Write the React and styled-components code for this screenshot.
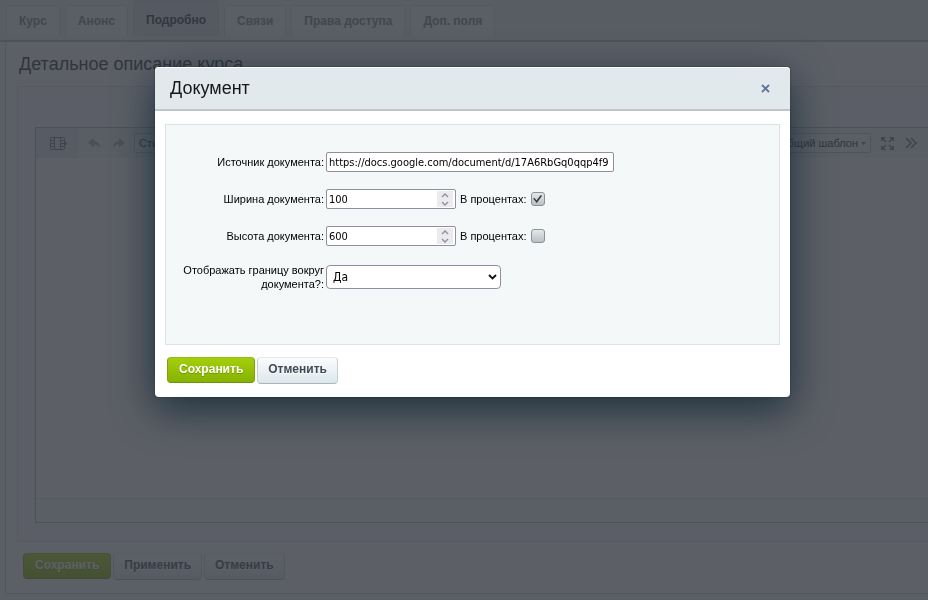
import React, { useState } from 'react'
import styled, { createGlobalStyle, css } from 'styled-components';

const GlobalStyle = createGlobalStyle`
  * {
    box-sizing: border-box;
  }

  body {
    margin: 0;
    background: #eef2f4;
    color: #000;
    font-family: "Liberation Sans", Arial, sans-serif;
    font-size: 12px;
    overflow: hidden;
  }

  button, input, select {
    font-family: inherit;
    margin: 0;
  }
`;

const Page = styled.div`
  display: flex;
  flex-direction: column;
  min-height: 100vh;
  padding-bottom: 6px;
`;

const TabBar = styled.nav`
  display: flex;
  align-items: flex-end;
  gap: 5px;
  height: 42px;
  padding: 0 6px 4px;
  background: #e3e8ea;
  border-bottom: 2px solid #b2bcc2;
`;

const Tab = styled.button`
  height: ${(props) => (props.$active ? 36 : 31)}px;
  padding: ${(props) => (props.$active ? '3px 12px 0' : '0 12px')};
  border: 1px solid ${(props) => (props.$active ? '#cdd5d9' : '#d3dade')};
  border-bottom: 0;
  border-radius: 3px 3px 0 0;
  background: ${(props) => (props.$active ? '#d8e0e4' : '#eff3f5')};
  color: ${(props) => (props.$active ? '#2a2f35' : '#737c85')};
  font-size: 12px;
  font-weight: bold;
  white-space: nowrap;
`;

const Panel = styled.main`
  flex: 1;
  margin-left: 5px;
  padding: 11px 0 0 11px;
  border-left: 1px solid #c9d2d7;
  border-bottom: 1px solid #c9d2d7;
  background: #f9fafb;
`;

const PageTitle = styled.h1`
  margin: 0 2px 11px;
  color: #22272d;
  font-size: 18px;
  font-weight: normal;
  line-height: 22px;
`;

const Content = styled.section`
  padding: 40px 0 18px 17px;
  border: 1px solid #dce3e6;
  border-right: 0;
  background: #f3f6f7;
`;

const Editor = styled.div`
  border: 1px solid #a9b4ba;
  border-right: 0;
  background: #f7f8f9;
`;

const Toolbar = styled.div`
  display: flex;
  align-items: center;
  gap: 8px;
  height: 30px;
  padding-right: 9px;
  background: #e8edf0;
`;

const ToolButton = styled.button`
  display: flex;
  align-items: center;
  justify-content: center;
  width: ${(props) => (props.$wide ? 42 : 16)}px;
  height: ${(props) => (props.$wide ? 30 : 20)}px;
  padding: ${(props) => (props.$wide ? '0 0 0 4px' : 0)};
  border: 0;
  background: ${(props) => (props.$wide ? '#dfe6e9' : 'transparent')};
  color: ${(props) => (props.$dim ? '#a5adb3' : '#68727c')};
`;

const Dropdown = styled.button`
  display: flex;
  align-items: center;
  gap: 3px;
  height: 20px;
  padding: 0 4px;
  border: 1px solid #bac3c8;
  border-radius: 2px;
  background: #eef2f4;
  color: #22272d;
  font-size: 11px;
  white-space: nowrap;
`;

const Spacer = styled.span`
  flex: 1;
`;

const EditorBody = styled.div`
  height: 340px;
`;

const EditorFooter = styled.div`
  height: 24px;
  border-top: 1px solid #dbe1e4;
  background: #f0f3f5;
`;

const ButtonRow = styled.div`
  display: flex;
  gap: 2px;
  padding: ${(props) => props.$padding};
`;

const Button = styled.button`
  height: 27px;
  padding: 0 10px 3px;
  border: 1px solid #c5d0d4;
  border-top-color: #e3e9eb;
  border-bottom-color: #aab6bc;
  border-radius: 4px;
  background: linear-gradient(#fbfcfd, #dde7eb);
  color: #3f4b54;
  font-size: 12px;
  font-weight: bold;
  line-height: 22px;
  text-shadow: 0 1px 0 #fff;
  ${(props) => props.$primary && css`
    height: 26px;
    padding: 0 11px 2px;
    border-color: #93bb12 #7da30d #6d9010;
    background: linear-gradient(#a5ce0d, #85b200);
    color: #fff;
    text-shadow: 0 1px 0 #6f9600;
  `}
`;

const Overlay = styled.div`
  position: fixed;
  inset: 0;
  padding: 67px 24px 24px 155px;
  background: rgba(52, 56, 65, 0.8);
`;

const Dialog = styled.form`
  max-width: 635px;
  border-radius: 4px;
  background: #fff;
  box-shadow: 0 12px 40px rgba(20, 42, 54, 0.9), 0 0 2px rgba(0, 0, 0, 0.5);
`;

const DialogHeader = styled.header`
  display: flex;
  align-items: center;
  justify-content: space-between;
  height: 44px;
  padding: 0 18px 1px 15px;
  border-top: 1px solid #fff;
  border-bottom: 2px solid #bfc5ca;
  border-radius: 4px 4px 0 0;
  background: #e1e9ec;
`;

const DialogTitle = styled.h2`
  margin: 0;
  color: #15181b;
  font-size: 18px;
  font-weight: normal;
`;

const CloseButton = styled.button`
  display: flex;
  padding: 2px;
  border: 0;
  background: none;
  color: #5f769a;
`;

const Fields = styled.div`
  display: grid;
  grid-template-columns: 158px 1fr;
  column-gap: 2px;
  row-gap: 17px;
  align-items: center;
  align-content: start;
  min-height: 221px;
  margin: 13px 10px 0;
  padding: 27px 10px 20px 0;
  border: 1px solid #d9e3e8;
  background: #f4f8f9;
`;

const Label = styled.label`
  font-size: 11px;
  line-height: 14px;
  text-align: right;
`;

const Control = styled.div`
  display: flex;
  align-items: center;
  gap: 4px;
`;

const inputStyle = css`
  height: 20px;
  border: 1px solid #8f8f9d;
  border-radius: 2px;
  background: #fff;
  color: #000;
  font-family: "DejaVu Sans Condensed", "DejaVu Sans", sans-serif;
  font-size: 11px;
`;

const TextInput = styled.input`
  ${inputStyle}
  width: 288px;
  padding: 0 2px;
`;

const NumberBox = styled.div`
  ${inputStyle}
  display: flex;
  width: 130px;
  padding: 0 2px 0 0;
`;

const NumberInput = styled.input`
  flex: 1;
  min-width: 0;
  padding: 0 2px;
  border: 0;
  background: none;
  font: inherit;
  appearance: textfield;

  &::-webkit-inner-spin-button {
    display: none;
  }
`;

const Spinner = styled.div`
  display: flex;
  flex-direction: column;
  width: 16px;
  height: 16px;
  margin-top: 1px;
  background: #ebebef;
`;

const SpinButton = styled.button`
  display: flex;
  align-items: center;
  justify-content: center;
  flex: 1;
  padding: 0;
  border: 0;
  background: none;
  color: #8f8f9d;
`;

const Checkbox = styled.input`
  display: grid;
  place-items: center;
  appearance: none;
  width: 14px;
  height: 14px;
  border: 1px solid #8b9297;
  border-radius: 3px;
  background: linear-gradient(#e4e8e9, #b9c0c4);

  &:checked::before {
    content: "";
    width: 9px;
    height: 8px;
    background: #34393d;
    clip-path: polygon(0 45%, 16% 36%, 38% 68%, 86% 0, 100% 10%, 42% 100%);
  }
`;

const SelectBox = styled.div`
  display: grid;
  align-items: center;
  width: 175px;

  > * {
    grid-area: 1 / 1;
  }

  > svg {
    justify-self: end;
    margin-right: 4px;
    pointer-events: none;
  }
`;

const Select = styled.select`
  ${inputStyle}
  width: 100%;
  height: 24px;
  padding: 0 6px;
  border-radius: 4px;
  font-size: 12px;
  appearance: none;
`;

const TABS = ['Курс', 'Анонс', 'Подробно', 'Связи', 'Права доступа', 'Доп. поля'];

const Chevron = ({ up }) => (
  <svg width="8" height="5" viewBox="0 0 8 5" fill="none" stroke="currentColor" strokeWidth="1.4">
    <path d={up ? 'M1 4L4 1L7 4' : 'M1 1L4 4L7 1'} />
  </svg>
);

const Caret = () => (
  <svg width="5" height="3" viewBox="0 0 5 3" fill="#68727c">
    <path d="M0 0H5L2.500 3Z" />
  </svg>
);

const FilmIcon = () => (
  <svg width="18" height="13" viewBox="0 0 18 13" fill="none" stroke="currentColor">
    <rect x=".5" y=".5" width="14" height="12" rx="1" />
    <path d="M4.500 .5V12.500M10.500 .5V12.500M.5 3.500H4M.5 6.500H4M.5 9.500H4M11 3.500H14.500M11 6.500H14.500M11 9.500H14.500" />
    <path d="M14.500 4.500L17.500 6.500L14.500 8.500Z" fill="currentColor" stroke="none" />
  </svg>
);

const ArrowIcon = ({ redo }) => (
  <svg width="13" height="11" viewBox="0 0 13 11" fill="currentColor">
    <path
      d="M6 0V3C10 3 12 6 12 10C10.500 7.500 9 6.500 6 6.500V9.500L0 4.800Z"
      transform={redo ? 'translate(13 0) scale(-1 1)' : undefined}
    />
  </svg>
);

const ExpandIcon = () => (
  <svg width="13" height="13" viewBox="0 0 13 13" fill="currentColor" stroke="currentColor">
    <path d="M.5 4V.5H4ZM9 .5H12.500V4ZM.5 9V12.500H4ZM9 12.500H12.500V9Z" />
    <path d="M2 2L5 5M11 2L8 5M2 11L5 8M11 11L8 8" strokeWidth="1.4" />
  </svg>
);

const MoreIcon = () => (
  <svg width="12" height="12" viewBox="0 0 12 12" fill="none" stroke="currentColor" strokeWidth="1.6">
    <path d="M1 1L6 6L1 11M6 1L11 6L6 11" />
  </svg>
);

const SizeField = ({ id, label, initial, percent }) => {
  const [value, setValue] = useState(initial);
  const [inPercent, setInPercent] = useState(percent);

  return (
    <>
      <Label htmlFor={id}>{label}</Label>
      <Control>
        <NumberBox>
          <NumberInput id={id} type="number" value={value} onChange={(e) => setValue(Number(e.target.value))} />
          <Spinner>
            <SpinButton type="button" aria-label="Увеличить" onClick={() => setValue(value + 1)}>
              <Chevron up />
            </SpinButton>
            <SpinButton type="button" aria-label="Уменьшить" onClick={() => setValue(value - 1)}>
              <Chevron />
            </SpinButton>
          </Spinner>
        </NumberBox>
        <Label htmlFor={`${id}-percent`}>В процентах:</Label>
        <Checkbox
          id={`${id}-percent`}
          type="checkbox"
          checked={inPercent}
          onChange={(e) => setInPercent(e.target.checked)}
        />
      </Control>
    </>
  );
};

const DocumentDialog = () => {
  const [source, setSource] = useState('https://docs.google.com/document/d/17A6RbGq0qqp4f9');
  const [border, setBorder] = useState('yes');

  return (
    <Overlay>
      <Dialog role="dialog" aria-labelledby="dialog-title" onSubmit={(e) => e.preventDefault()}>
        <DialogHeader>
          <DialogTitle id="dialog-title">Документ</DialogTitle>
          <CloseButton type="button" aria-label="Закрыть">
            <svg width="9" height="9" viewBox="0 0 9 9" stroke="currentColor" strokeWidth="1.8">
              <path d="M1 1L8 8M8 1L1 8" />
            </svg>
          </CloseButton>
        </DialogHeader>
        <Fields>
          <Label htmlFor="source">Источник документа:</Label>
          <Control>
            <TextInput id="source" type="text" value={source} onChange={(e) => setSource(e.target.value)} />
          </Control>
          <SizeField id="width" label="Ширина документа:" initial={100} percent />
          <SizeField id="height" label="Высота документа:" initial={600} percent={false} />
          <Label htmlFor="border">Отображать границу вокруг документа?:</Label>
          <SelectBox>
            <Select id="border" value={border} onChange={(e) => setBorder(e.target.value)}>
              <option value="yes">Да</option>
              <option value="no">Нет</option>
            </Select>
            <svg width="9" height="6" viewBox="0 0 9 6" fill="none" stroke="#111" strokeWidth="1.8">
              <path d="M1 1L4.500 4.500L8 1" />
            </svg>
          </SelectBox>
        </Fields>
        <ButtonRow $padding="12px 12px 13px">
          <Button $primary type="submit">Сохранить</Button>
          <Button type="button">Отменить</Button>
        </ButtonRow>
      </Dialog>
    </Overlay>
  );
};

const App = () => (
  <>
    <GlobalStyle />
    <Page>
      <TabBar>
        {TABS.map((tab) => (
          <Tab key={tab} type="button" $active={tab === 'Подробно'}>{tab}</Tab>
        ))}
      </TabBar>
      <Panel>
        <PageTitle>Детальное описание курса</PageTitle>
        <Content>
          <Editor>
            <Toolbar>
              <ToolButton $wide type="button" aria-label="Вставить"><FilmIcon /></ToolButton>
              <ToolButton $dim type="button" aria-label="Назад"><ArrowIcon /></ToolButton>
              <ToolButton $dim type="button" aria-label="Вперёд"><ArrowIcon redo /></ToolButton>
              <Dropdown type="button">Стиль</Dropdown>
              <Spacer />
              <Dropdown type="button">Общий шаблон <Caret /></Dropdown>
              <ToolButton type="button" aria-label="На весь экран"><ExpandIcon /></ToolButton>
              <ToolButton type="button" aria-label="Ещё"><MoreIcon /></ToolButton>
            </Toolbar>
            <EditorBody />
            <EditorFooter />
          </Editor>
        </Content>
        <ButtonRow $padding="11px 6px">
          <Button $primary type="button">Сохранить</Button>
          <Button type="button">Применить</Button>
          <Button type="button">Отменить</Button>
        </ButtonRow>
      </Panel>
    </Page>
    <DocumentDialog />
  </>
);

export default App;
